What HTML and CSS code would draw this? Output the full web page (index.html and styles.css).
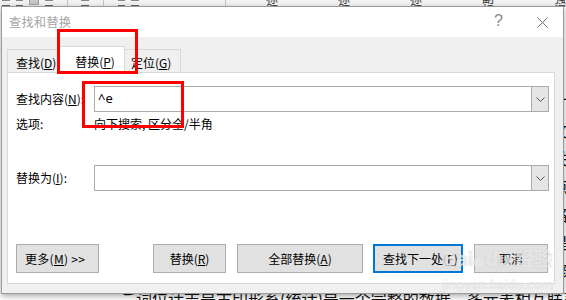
FILE: index.html
```html
<!DOCTYPE html>
<html lang="zh-CN">
<head>
  <meta charset="UTF-8" />
  <title>查找和替换</title>
  <link rel="stylesheet" href="styles.css">
</head>
<body>
<div class="desk">

  <!-- Word ribbon strip behind the dialog -->
  <div class="ribbon">
    <span class="rb-icon"></span>
    <span class="rb-icon"></span>
    <span class="rb-icon rb-on"></span>
    <span class="rb-icon"></span>
    <span class="rb-sep"></span>
    <span class="rb-icon"></span>
    <span class="rb-sep"></span>
    <span class="rb-icon"></span>
    <span class="rb-icon"></span>
    <span class="rb-gallery">
      <span>标题</span><span>标题 1</span><span>标题 2</span><span>副标题</span><span>强调</span>
    </span>
  </div>

  <div class="page">
    <p>在词汇的统计中有时需要对多种格式的数据进行查找和替换，才能快速完成</p>
    <p>对文档内容的整理和排版操作，这里介绍的方法同样适合其他文档的处理</p>
    <p>打开文档之后按下快捷键即可调出查找和替换的对话框进行相关设置和操作</p>
    <p>在查找内容中输入特殊字符，替换为中输入需要的内容，然后点击全部替换</p>
    <p>这样就能够将文档中所有符合条件的内容一次性替换成为新的格式和内容</p>
    <p>如果需要逐个确认，可以点击查找下一处，然后根据需要选择是否替换内容</p>
    <p>多个表格之间相互联系，同时保持格式统一，便于后续阅读和修改各项数据</p>
    <p>ご词位计志是古印形系(统计)是一个完整的数据，多元表相互联系，方便查阅</p>
  </div>

  <!-- the dialog window -->
  <div class="dialog">
    <div class="titlebar">
      <span class="title">查找和替换</span>
      <span class="help">?</span>
      <svg class="close" width="11" height="11" viewBox="0 0 11 11">
        <path d="M0.5 0.5 L10.5 10.5 M10.5 0.5 L0.5 10.5" stroke="#6f6f6f" stroke-width="1" fill="none"/>
      </svg>
    </div>

    <div class="dlg-body">
      <div class="tabs">
        <div class="tab">查找(<u>D</u>)</div>
        <div class="tab active">替换(<u>P</u>)</div>
        <div class="tab">定位(<u>G</u>)</div>
      </div>

      <div class="panel">
        <div class="row find-row">
          <label class="lbl">查找内容(<u>N</u>):</label>
          <div class="combo">
            <span class="value">^e</span>
            <span class="drop">
              <svg width="9" height="5" viewBox="0 0 9 5"><path d="M0.5 0.5 L4.5 4.5 L8.5 0.5" stroke="#555" stroke-width="1" fill="none"/></svg>
            </span>
          </div>
        </div>

        <div class="row opt-row">
          <span class="lbl">选项:</span>
          <span class="opts">向下搜索, 区分全/半角</span>
        </div>

        <div class="row repl-row">
          <label class="lbl">替换为(<u>I</u>):</label>
          <div class="combo">
            <span class="value"></span>
            <span class="drop">
              <svg width="9" height="5" viewBox="0 0 9 5"><path d="M0.5 0.5 L4.5 4.5 L8.5 0.5" stroke="#555" stroke-width="1" fill="none"/></svg>
            </span>
          </div>
        </div>

        <div class="buttons">
          <button class="btn btn-more">更多(<u>M</u>) &gt;&gt;</button>
          <button class="btn btn-repl">替换(<u>R</u>)</button>
          <button class="btn btn-all">全部替换(<u>A</u>)</button>
          <button class="btn btn-next">查找下一处(<u>F</u>)</button>
          <button class="btn btn-cancel">取消</button>
        </div>
      </div>
    </div>
  </div>

  <!-- annotation boxes and watermark lying on top -->
  <div class="mark mark-tab"></div>
  <div class="mark mark-find"></div>

  <div class="watermark">
    <div class="wm-logo">Bai<span class="wm-paw">●</span>du 经验</div>
    <div class="wm-url">jingyan.baidu.com</div>
  </div>

</div>
</body>
</html>
```

FILE: styles.css
```css
    body {
      margin: 0;
      padding: 0;
      background: #fff;
      font-family: "Noto Sans", "Noto Sans CJK SC", sans-serif;
      font-size: 12px;
      color: #000;
    }
    .desk {
      position: relative;
      width: 566px;
      height: 300px;
      overflow: hidden;
      background: #fff;
    }

    /* ribbon strip */
    .ribbon {
      height: 7px;
      background: #f3f3f3;
      display: flex;
      align-items: flex-start;
      gap: 6px;
      padding-left: 2px;
      overflow: hidden;
    }
    .rb-icon {
      width: 14px;
      height: 4px;
      border-bottom: 1px solid #666;
      border-top: 1px solid #888;
    }
    .rb-on {
      background: #c8c8c8;
      border: 1px solid #a0a0a0;
      border-top: none;
    }
    .rb-sep {
      width: 1px;
      height: 7px;
      background: #c6c6c6;
      margin: 0 8px;
    }
    .rb-gallery {
      display: flex;
      gap: 60px;
      margin-left: 80px;
      border-left: 1px solid #c6c6c6;
      padding-left: 40px;
      font-size: 12px;
      line-height: 12px;
      margin-top: -7px;
      color: #333;
    }

    /* document text behind */
    .page {
      padding: 81px 0 0 120px;
      width: 640px;
      font-family: "Noto Sans CJK SC", sans-serif;
      font-size: 16px;
      line-height: 28px;
      color: #111;
      white-space: nowrap;
    }
    .page p {
      margin: 0;
    }

    /* dialog */
    .dialog {
      position: absolute;
      left: 1px;
      top: 6px;
      width: 561px;
      height: 286px;
      border: 1px solid #9b9b9b;
      background: #f0f0f0;
      box-shadow: 0 2px 6px rgba(0, 0, 0, 0.35);
    }
    .titlebar {
      position: relative;
      height: 30px;
      background: #fff;
    }
    .title {
      position: absolute;
      left: 7px;
      top: 7px;
      font-family: "Noto Sans CJK SC", sans-serif;
      font-size: 12px;
      line-height: 16px;
      color: #a3a3a3;
      letter-spacing: 0.5px;
    }
    .help {
      position: absolute;
      left: 492px;
      top: 4px;
      font-family: "Liberation Sans", sans-serif;
      font-size: 16px;
      line-height: 20px;
      color: #8a8a8a;
    }
    .close {
      position: absolute;
      left: 535px;
      top: 10px;
    }

    .dlg-body {
      padding: 9px 7px 0 5px;
    }
    .tabs {
      display: flex;
      align-items: flex-end;
      height: 26px;
    }
    .tab {
      height: 23px;
      box-sizing: border-box;
      border: 1px solid #d9d9d9;
      border-bottom: none;
      background: #f0f0f0;
      font-family: "Noto Sans CJK SC", sans-serif;
      font-size: 12px;
      line-height: 26px;
      text-align: center;
    }
    .tab:first-child {
      width: 52px;
      text-align: left;
      padding-left: 8px;
    }
    .tab.active {
      width: 66px;
      height: 27px;
      margin-bottom: -1px;
      background: #fff;
      position: relative;
      z-index: 1;
      line-height: 30px;
      padding-left: 6px;
    }
    .tab:last-child {
      width: 56px;
      border-left: none;
      text-align: left;
      padding-left: 6px;
    }
    u {
      text-decoration-thickness: 1px;
      text-underline-offset: 1px;
    }

    .panel {
      position: relative;
      box-sizing: border-box;
      width: 548px;
      height: 212px;
      border: 1px solid #d9d9d9;
      background: #fff;
      padding-left: 8px;
    }
    .row {
      display: flex;
      align-items: center;
    }
    .lbl {
      width: 78px;
      font-family: "Noto Sans CJK SC", sans-serif;
      font-size: 12px;
      line-height: 16px;
      flex-shrink: 0;
    }
    .find-row {
      margin-top: 13px;
      height: 26px;
    }
    .opt-row {
      margin-top: 3px;
      height: 18px;
    }
    .opts {
      font-family: "Noto Sans CJK SC", sans-serif;
      font-size: 12px;
      line-height: 16px;
    }
    .repl-row {
      margin-top: 32px;
      height: 26px;
    }
    .combo {
      display: flex;
      width: 455px;
      height: 26px;
      box-sizing: border-box;
      border: 1px solid #ababab;
      background: #fff;
    }
    .value {
      flex: 1;
      padding-left: 3px;
      font-family: "Noto Sans", sans-serif;
      font-size: 13px;
      line-height: 23px;
    }
    .drop {
      width: 18px;
      margin: -1px -1px -1px 0;
      box-sizing: border-box;
      border: 1px solid #ababab;
      background: #e5e5e5;
      display: flex;
      align-items: center;
      justify-content: center;
    }

    .buttons {
      display: flex;
      margin-top: 53px;
    }
    .btn {
      height: 29px;
      box-sizing: border-box;
      border: 1px solid #adadad;
      background: #e1e1e1;
      font-family: "Noto Sans CJK SC", sans-serif;
      font-size: 12px;
      color: #000;
      padding: 0;
    }
    .btn-more {
      width: 83px;
      text-align: left;
      padding-left: 8px;
      letter-spacing: 0.3px;
    }
    .btn-repl {
      width: 73px;
      margin-left: 54px;
    }
    .btn-all {
      width: 126px;
      margin-left: 11px;
    }
    .btn-next {
      width: 90px;
      margin-left: 10px;
      border: 2px solid #0078d7;
      text-align: left;
      padding-left: 8px;
    }
    .btn-cancel {
      width: 74px;
      margin-left: 11px;
    }

    /* red annotation boxes */
    .mark {
      position: absolute;
      border: 3px solid #ff0000;
      box-sizing: border-box;
      z-index: 5;
    }
    .mark-tab {
      left: 57px;
      top: 29px;
      width: 81px;
      height: 45px;
    }
    .mark-find {
      left: 82px;
      top: 81px;
      width: 102px;
      height: 47px;
    }

    /* faint site watermark */
    .watermark {
      position: absolute;
      left: 442px;
      top: 246px;
      z-index: 6;
      white-space: nowrap;
      color: rgba(255, 255, 255, 0.6);
      text-shadow: 0 0 1px rgba(150, 150, 150, 0.45);
      font-family: "DejaVu Sans", "Noto Sans CJK SC", sans-serif;
    }
    .wm-logo {
      font-size: 19px;
      font-weight: bold;
      line-height: 26px;
      letter-spacing: -1px;
    }
    .wm-paw {
      font-size: 15px;
    }
    .wm-url {
      font-size: 12px;
      line-height: 14px;
      margin-top: 4px;
    }
```
